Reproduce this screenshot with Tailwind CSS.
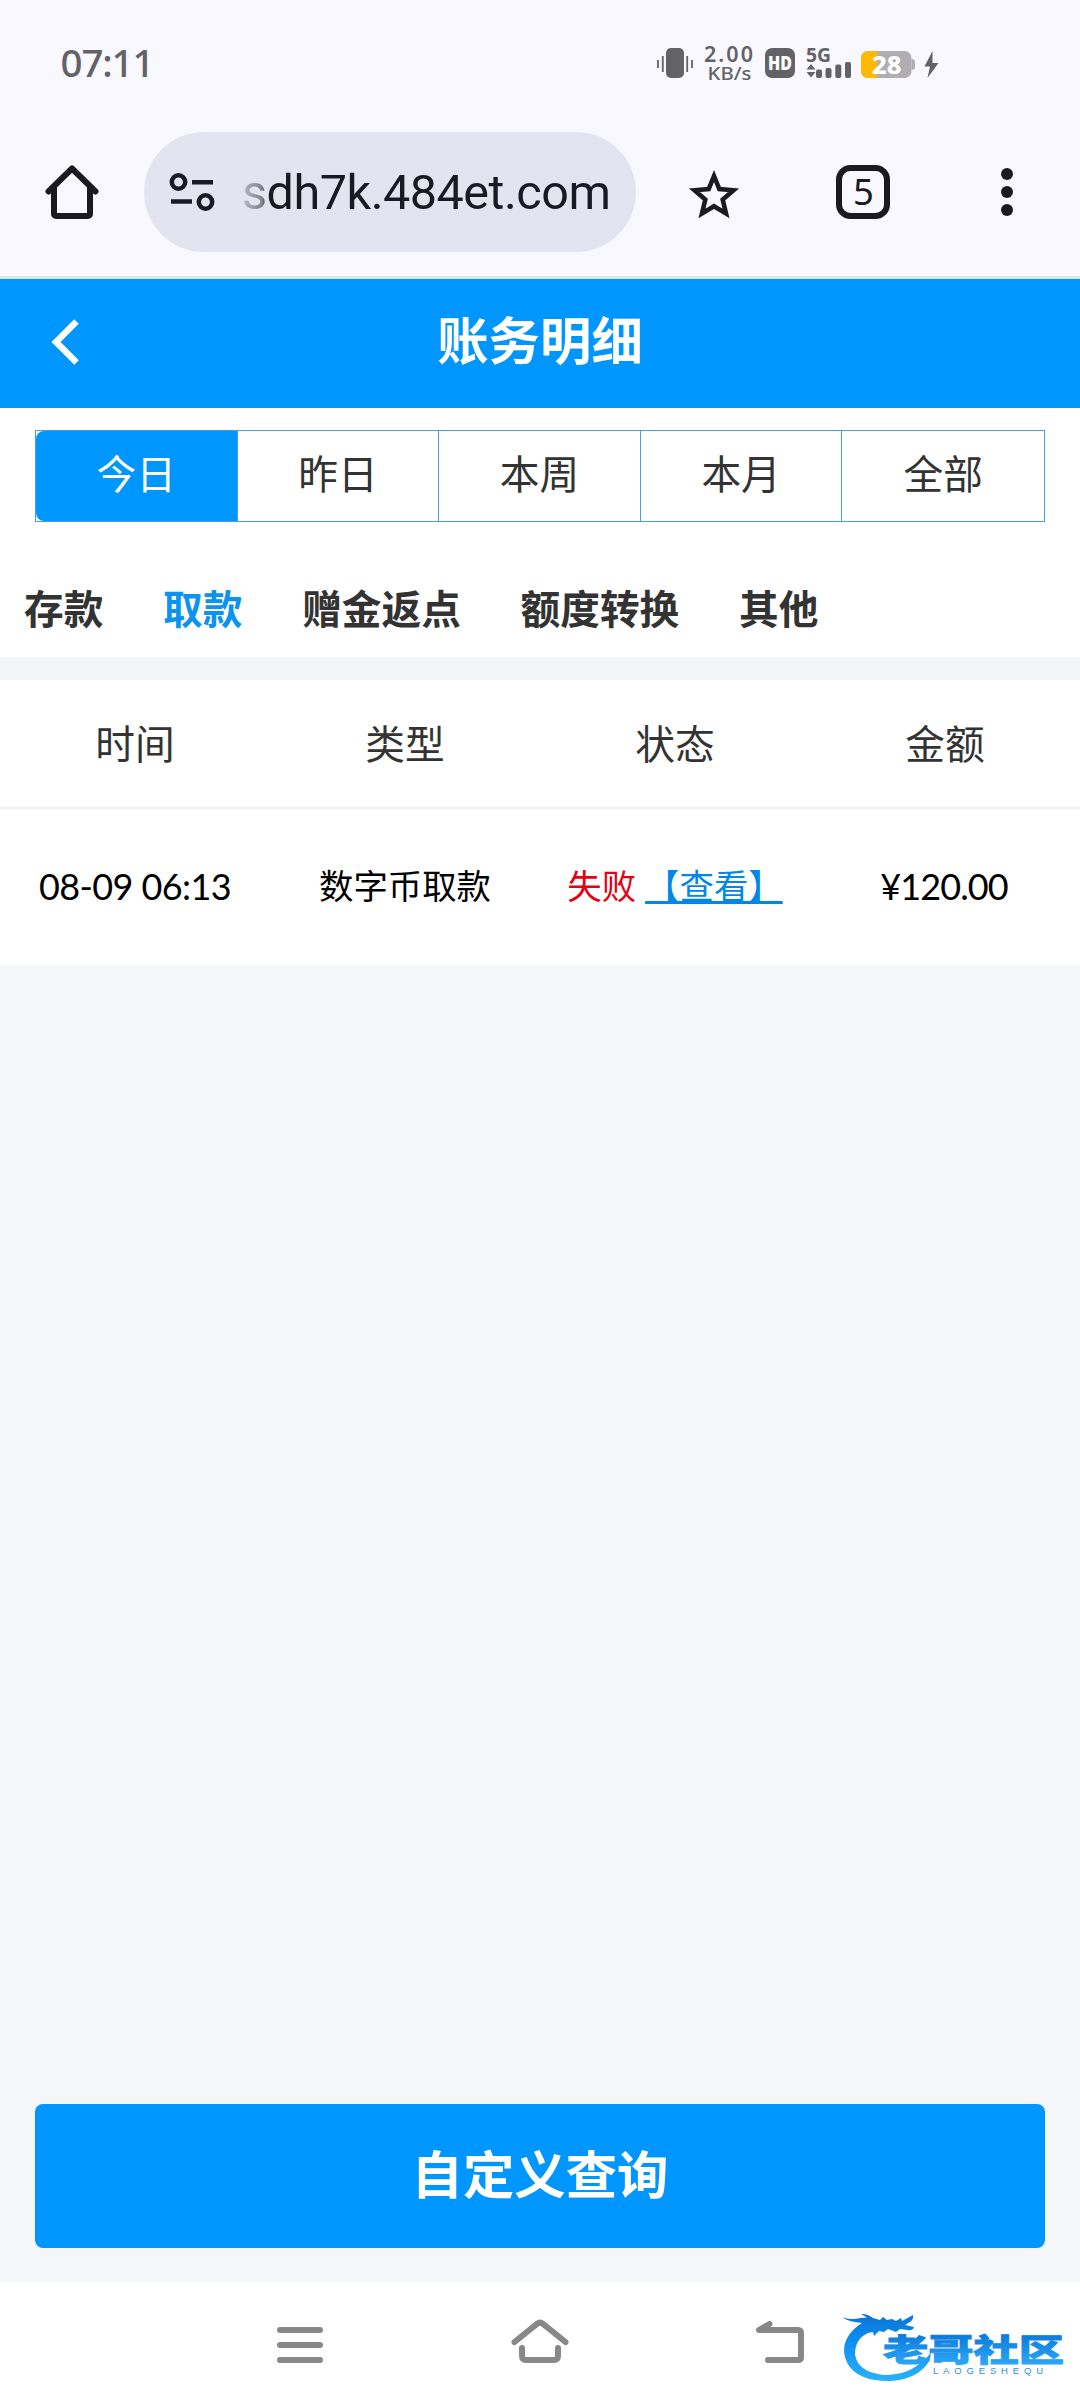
<!DOCTYPE html>
<html lang="zh-CN">
<head>
<meta charset="utf-8">
<title>账务明细</title>
<script src="https://cdn.jsdelivr.net/npm/@tailwindcss/browser@4"></script>
</head>
<body class="w-[1080px] h-[2408px] overflow-hidden flex flex-col bg-[#f4f6f8] font-['Roboto','Noto_Sans_CJK_SC',sans-serif] text-[#333333]">

<!-- status bar -->
<div class="h-[126px] shrink-0 bg-[#f9f8ff] flex justify-between pl-[60px]">
  <svg class="w-[100px] h-[126px]" viewBox="60 0 100 126" fill="#636266"><text x="60.500" y="76.500" font-family="Noto Sans" font-weight="500" font-size="38.500" textLength="94">07:11</text></svg>
  <svg class="w-[440px] h-[126px]" viewBox="640 0 440 126" fill="#636266" font-family="Noto Sans">
    <rect x="666" y="48" width="18" height="30" rx="5"/>
    <path d="M658 60v8M662.800 56v16M687.200 56v16M692 60v8" stroke="#636266" stroke-width="1.800"/>
    <text x="704" y="61.500" font-size="21.500" font-weight="600" textLength="49">2.00</text>
    <text x="707.500" y="79.500" font-size="18.500" font-weight="500" textLength="44" lengthAdjust="spacingAndGlyphs">KB/s</text>
    <rect x="765" y="48" width="30" height="30" rx="7"/>
    <text x="768" y="70" font-size="19" font-weight="900" fill="#fff" textLength="24" lengthAdjust="spacingAndGlyphs">HD</text>
    <text x="806" y="62" font-size="19.500" font-weight="700" textLength="25" lengthAdjust="spacingAndGlyphs">5G</text>
    <path d="M806.500 69.500l4.500-5.500 4.500 5.500zM806.500 72h9l-4.500 5.500z"/>
    <rect x="816" y="69.500" width="6" height="8.500" rx="2"/><rect x="825.500" y="68" width="6" height="10" rx="2"/><rect x="835.300" y="64.500" width="6" height="13.500" rx="2"/><rect x="845" y="62" width="6" height="16" rx="2"/>
    <rect x="861" y="51" width="50.500" height="27" rx="7" fill="#b0aeb3"/>
    <path d="M877 51h-9a7 7 0 0 0-7 7v13a7 7 0 0 0 7 7h9z" fill="#feb900"/>
    <path d="M911.500 59q3.500 0 3.500 3v5q0 3-3.500 3z" fill="#b0aeb3"/>
    <text x="872" y="73.500" font-size="24" font-weight="800" fill="#fff" textLength="29.500" lengthAdjust="spacingAndGlyphs">28</text>
    <path d="M932.500 51l-8 15.500h5.500l-2.500 11.500 11-15h-6z"/>
  </svg>
</div>

<!-- browser toolbar -->
<div class="h-[150px] shrink-0 bg-[#f9f8ff] flex items-start pt-[6px]">
  <div class="w-[144px] h-[120px] flex items-center justify-center">
    <svg class="w-[60px] h-[60px]" viewBox="42 162 60 60" fill="none" stroke="#1b1a20" stroke-width="6" stroke-linecap="round" stroke-linejoin="round"><path d="M48.500 191.500L72 168.500 95.500 191.500"/><path d="M54 188v26a2 2 0 0 0 2 2h32a2 2 0 0 0 2-2v-26"/></svg>
  </div>
  <div class="w-[492px] h-[120px] rounded-full bg-[#e4e4f0] flex items-center pl-[24px]">
    <svg class="w-[48px] h-[48px]" viewBox="168 168 48 48" fill="none" stroke="#1b1a24" stroke-width="4.500"><circle cx="178.500" cy="182" r="6.700"/><circle cx="205.500" cy="202" r="6.700"/><path d="M192 182.300h21M171 201.600h21"/></svg>
    <svg class="w-[380px] h-[120px] ml-[24px]" viewBox="240 132 380 120">
      <defs><linearGradient id="fade" gradientUnits="userSpaceOnUse" x1="234" y1="0" x2="278" y2="0"><stop offset="0" stop-color="#1b1a24" stop-opacity=".1"/><stop offset=".65" stop-color="#1b1a24" stop-opacity=".5"/><stop offset=".75" stop-color="#1b1a24"/></linearGradient></defs>
      <text x="242" y="209" font-family="Roboto" font-size="48.500" fill="url(#fade)" textLength="369">sdh7k.484et.com</text>
    </svg>
  </div>
  <div class="flex-1 h-[120px] flex items-center pl-[48px]">
    <svg class="w-[60px] h-[60px]" viewBox="684 162 60 60" fill="none" stroke="#1b1a20" stroke-width="4.600"><path d="M714 176L719.300 189 733.500 190.300 722.700 199.600 726 213.500 714 206.200 702 213.500 705.300 199.600 694.500 190.300 708.700 189z" stroke-miterlimit="8"/></svg>
    <svg class="w-[60px] h-[60px] ml-[89px]" viewBox="834 162 60 60" fill="none"><rect x="840" y="168" width="48" height="48" rx="11.500" stroke="#1b1a20" stroke-width="6"/><text x="864.500" y="205" text-anchor="middle" font-family="Noto Sans" font-weight="400" font-size="36.500" fill="#1b1a20">5</text></svg>
    <svg class="w-[20px] h-[60px] ml-[104px]" viewBox="998 162 20 60" fill="#1b1a20"><circle cx="1008" cy="174" r="6"/><circle cx="1008" cy="192" r="6"/><circle cx="1008" cy="210" r="6"/></svg>
  </div>
</div>
<div class="h-[3px] shrink-0 bg-[#d8e6f8]"></div>

<!-- page header -->
<div class="h-[129px] shrink-0 bg-[#0096ff] grid grid-cols-[130px_1fr_130px] items-center">
  <svg class="w-[36px] h-[54px] ml-[47px] mb-[3px]" viewBox="0 0 36 54" fill="none" stroke="#fff" stroke-width="6.500"><path d="M29.500 6.500L9 27l20.500 20.500"/></svg>
  <h1 class="text-center text-[51.400px] leading-[60px] font-bold text-white pb-[1px]">账务明细</h1>
</div>

<!-- date range -->
<div class="h-[249px] shrink-0 bg-white pt-[22px]">
  <div class="mx-[35px] h-[92px] grid grid-cols-5 border border-[#4b9fe0] text-[39.700px] text-center divide-x divide-[#4b9fe0]">
    <div class="bg-[#0096ff] text-white rounded-l-[8px] leading-[90px]">今日</div>
    <div class="leading-[90px]">昨日</div>
    <div class="leading-[90px]">本周</div>
    <div class="leading-[90px]">本月</div>
    <div class="leading-[90px]">全部</div>
  </div>
  <div class="flex gap-[59.700px] pl-[24px] mt-[59px] text-[39.700px] leading-[60px] font-bold">
    <span>存款</span><span class="text-[#0b93f0]">取款</span><span>赠金返点</span><span>额度转换</span><span>其他</span>
  </div>
</div>
<div class="h-[23px] shrink-0 bg-[#f4f5f6]"></div>

<!-- records -->
<div class="h-[129px] shrink-0 bg-white border-b-2 border-[#f0f1f2] grid grid-cols-4 text-center text-[39.700px]">
  <div class="leading-[131px]">时间</div><div class="leading-[131px]">类型</div><div class="leading-[131px]">状态</div><div class="leading-[131px]">金额</div>
</div>
<div class="h-[156px] shrink-0 bg-white grid grid-cols-4 text-center text-[34.400px] leading-[157px] text-black whitespace-nowrap">
  <div class="font-['Lato'] text-[36px] leading-[155px] tracking-[-0.6px]">08-09 06:13</div>
  <div>数字币取款</div>
  <div class="flex justify-center gap-[9px]"><span class="text-[#e60012]">失败</span><a class="text-[#0088e8] underline decoration-[3px] underline-offset-[2px] [text-decoration-skip-ink:none]">【查看】</a></div>
  <div class="font-['Lato'] text-[36px] leading-[155px] tracking-[-0.9px] pr-[2px]">¥120.00</div>
</div>

<!-- primary action -->
<div class="flex-1 flex flex-col justify-end px-[35px] pb-[34px]">
  <button class="h-[144px] rounded-[8px] bg-[#0096ff] text-white font-bold text-[51.400px] leading-[60px] pt-[2px]">自定义查询</button>
</div>

<!-- system navigation -->
<div class="h-[126px] shrink-0 bg-white relative flex items-start pt-[33px] pl-[270px]">
  <svg class="w-[60px] h-[60px]" viewBox="270 2315 60 60" fill="none" stroke="#888" stroke-width="6" stroke-linecap="round"><path d="M280 2330h40M280 2345h40M280 2360h40"/></svg>
  <svg class="w-[60px] h-[60px] ml-[180px]" viewBox="510 2315 60 60" fill="none" stroke="#888" stroke-width="6" stroke-linecap="round" stroke-linejoin="round"><path d="M514.500 2342L537 2323.800q3-2.300 6 0L565.500 2342M522 2348v8q0 4 4 4h28q4 0 4-4v-8"/></svg>
  <svg class="w-[60px] h-[60px] ml-[180px]" viewBox="750 2315 60 60" fill="none" stroke="#888" stroke-width="6" stroke-linecap="round" stroke-linejoin="round"><path d="M769.500 2324L759 2330h39q3 0 3 3v24q0 3-3 3h-30"/></svg>
  <!-- community logo -->
  <svg class="absolute left-[830px] top-[18px] w-[250px] h-[108px]" viewBox="0 0 250 108">
    <defs><linearGradient id="lg" gradientUnits="userSpaceOnUse" x1="0" y1="14" x2="0" y2="82"><stop offset="0" stop-color="#0c74d4"/><stop offset=".35" stop-color="#0d8aee"/><stop offset="1" stop-color="#29b4fa"/></linearGradient>
    <linearGradient id="tg" gradientUnits="userSpaceOnUse" x1="0" y1="35" x2="0" y2="64"><stop offset="0" stop-color="#0c7bdc"/><stop offset="1" stop-color="#2ca6f6"/></linearGradient></defs>
    <path fill="url(#lg)" d="M12 17.500Q20 20 31 18L37 17.500 31 14Q37 13.500 43 18L50 20 53 17 57 20 62 19 66 21 71 18 72 21 83 15Q84 19 80 22L75 25 84 27Q83 31 77 30L70 29 66 32 58 29 54 32 49 31 44 36 43 32 38 33Q25 39 25 54Q27 72 54 75Q80 75 93 60Q99 57 101 51L100 60Q89 79 61 81Q31 82 19 66Q9 50 19 35Q24 28 32 23Q20 22 12 17.500z"/>
    <text x="0" y="61" transform="translate(53 0) scale(1.460 1)" font-family="Noto Sans CJK SC" font-weight="900" font-size="31" fill="url(#tg)" stroke="url(#tg)" stroke-width=".9" textLength="124">老哥社区</text>
    <text x="103" y="73.500" font-family="Liberation Sans" font-size="9.500" fill="#2a8fdd" textLength="110">LAOGESHEQU</text>
  </svg>
</div>
</body>
</html>
